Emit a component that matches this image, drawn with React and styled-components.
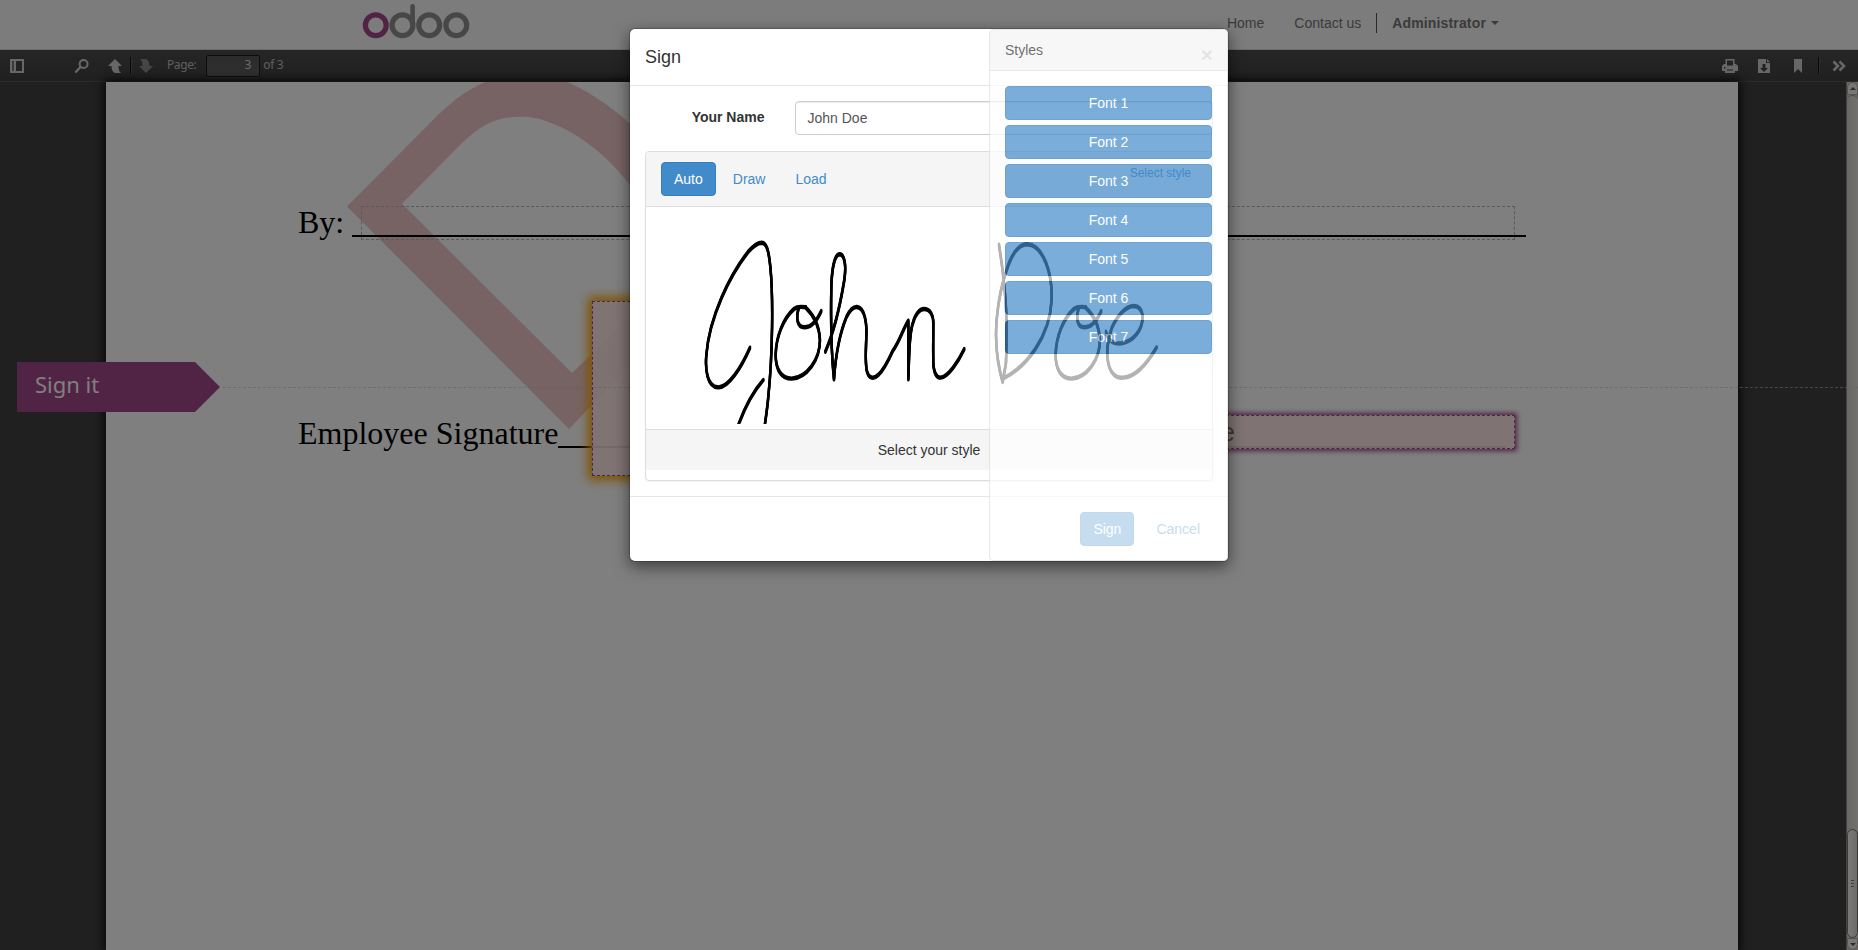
import React from 'react';
import styled, { createGlobalStyle, css } from 'styled-components';

const GlobalStyle = createGlobalStyle`
  *, *::before, *::after { box-sizing: border-box; }
  html, body { margin: 0; padding: 0; height: 100%; overflow: hidden; }
  body {
    font-family: "Liberation Sans", Arial, sans-serif;
    font-size: 14px;
    line-height: 20px;
    color: #333;
    background: #404040;
  }
`;

const Screen = styled.div`
  position: relative;
  display: flex;
  flex-direction: column;
  width: 1858px;
  height: 950px;
  overflow: hidden;
`;

/* ---------- site navigation ---------- */

const Navbar = styled.header`
  display: flex;
  justify-content: space-between;
  flex: 0 0 50px;
  padding: 0 359px 0 362px;
  background: #f8f8f8;
  border-bottom: 1px solid #d8d8d8;
`;

const Logo = styled.svg`
  display: block;
  width: 110px;
  height: 42px;
`;

const NavMenu = styled.nav`
  display: flex;
  align-items: center;
  height: 46px;
  color: #777;
`;

const NavLink = styled.a`
  margin-right: ${(p) => p.$gap || 0}px;
  font-weight: ${(p) => (p.$bold ? 700 : 400)};
  letter-spacing: ${(p) => (p.$bold ? '0.15px' : 'normal')};
`;

const NavDivider = styled.span`
  width: 1px;
  height: 20px;
  margin-right: 15px;
  background: #555;
`;

const Caret = styled.span`
  margin-left: 5px;
  border-top: 4px solid #777;
  border-left: 4px solid transparent;
  border-right: 4px solid transparent;
`;

/* ---------- document viewer toolbar ---------- */

const Toolbar = styled.div`
  display: flex;
  align-items: center;
  justify-content: space-between;
  flex: 0 0 32px;
  padding: 0 11px 0 9px;
  background: linear-gradient(#4c4c4c, #404040);
  border-bottom: 1px solid #565656;
  color: #d0d0d0;
  font-family: "Noto Sans", sans-serif;
  font-size: 12px;
`;

const ToolGroup = styled.div`
  display: flex;
  align-items: center;
`;

const ToolIcon = styled.svg`
  display: block;
  width: 16px;
  height: 16px;
  margin-right: ${(p) => p.$gap || 0}px;
  fill: ${(p) => (p.$dim ? '#8c8c8c' : '#cfcfcf')};
`;

const ToolDivider = styled.span`
  width: 1px;
  height: 17px;
  margin-right: ${(p) => p.$gap}px;
  background: #151515;
  box-shadow: 1px 0 0 #5a5a5a;
`;

const ToolText = styled.span`
  padding-bottom: 2px;
  color: #bdbdbd;
  letter-spacing: -0.4px;
`;

const PageInput = styled.span`
  width: 54px;
  height: 22px;
  margin: 0 3px 0 10px;
  padding: 0 8px;
  border: 1px solid #1a1a1a;
  border-radius: 2px;
  background: linear-gradient(#565656, #626262);
  box-shadow: 0 1px 0 #555;
  color: #d8d8d8;
  line-height: 18px;
  text-align: right;
`;

/* ---------- document ---------- */

const Viewer = styled.main`
  position: relative;
  display: flex;
  flex: 1;
  min-height: 0;
  padding-left: 106px;
  background: #404040;
`;

const Sheet = styled.article`
  position: relative;
  width: 1632px;
  padding: 122px 212px 0 192px;
  background: #fff;
  box-shadow: 0 0 9px 2px rgba(0, 0, 0, 0.85);
  font: 32px/37px "Liberation Serif", "Times New Roman", serif;
  color: #000;
`;

const Watermark = styled.svg`
  position: absolute;
  left: 0;
  top: 0;
  width: 700px;
  height: 400px;
`;

const FormLine = styled.div`
  position: relative;
  display: flex;
  height: 37px;
  margin-right: ${(p) => p.$inset || 0}px;
  margin-bottom: ${(p) => p.$gap || 0}px;
  white-space: nowrap;
`;

const Blank = styled.span`
  flex: 1;
  height: 33px;
  margin-left: ${(p) => p.$space || 0}px;
  border-bottom: 2px solid #000;
`;

const Field = styled.div`
  position: absolute;
  left: ${(p) => p.$x}px;
  top: ${(p) => p.$y}px;
  width: ${(p) => p.$w}px;
  height: ${(p) => p.$h}px;
  padding-left: 10px;
  border: 1px dashed #b4b4b4;
  ${(p) =>
    p.$glow &&
    css`
      border-color: #a24689;
      background: rgba(254, 229, 229, 0.92);
      box-shadow: 0 0 ${p.$blur}px ${p.$spread}px ${p.$glow};
    `}
  font: 26px/32px "Liberation Sans", Arial, sans-serif;
  text-align: center;
  color: #777;
`;

const Scrollbar = styled.div`
  display: flex;
  flex-direction: column;
  width: 12px;
  margin-left: auto;
  border-left: 1px solid #8a8682;
  background: #d2cdc7;
`;

const ScrollButton = styled.div`
  display: flex;
  align-items: center;
  justify-content: center;
  height: ${(p) => p.$h}px;
  background: #f0eeec;
  border: 1px solid #aaa6a2;
  border-radius: ${(p) => (p.$down ? '0 0 6px 6px' : '6px 6px 0 0')};
  &::before {
    content: '';
    border: 3px solid transparent;
    border-${(p) => (p.$down ? 'top' : 'bottom')}: 3px solid #555;
    border-${(p) => (p.$down ? 'bottom' : 'top')}: 0;
  }
`;

const ScrollTrack = styled.div`
  display: flex;
  flex-direction: column;
  justify-content: flex-end;
  flex: 1;
  border-top: 1px solid #9a9692;
  border-radius: 6px 6px 0 0;
  background: linear-gradient(90deg, #d4d0ca, #e4e1dd);
`;

const ScrollThumb = styled.div`
  display: flex;
  flex-direction: column;
  align-items: center;
  justify-content: center;
  gap: 2px;
  height: 109px;
  border: 1px solid #77736e;
  border-radius: 6px;
  background: linear-gradient(90deg, #f4f2f0, #d9d6d2);
`;

const Grip = styled.i`
  width: 3px;
  height: 1px;
  background: #777;
`;

const SignGuide = styled.div`
  position: absolute;
  left: 17px;
  right: 0;
  top: 280px;
  display: flex;
  align-items: center;
`;

const SignTag = styled.div`
  width: 203px;
  height: 50px;
  padding-left: 18px;
  clip-path: polygon(0 0, 178px 0, 100% 50%, 178px 100%, 0 100%);
  background: #a24689;
  color: #fff;
  font: 22px/44px "Noto Sans", sans-serif;
`;

const GuideLine = styled.div`
  flex: 1;
  margin-left: 3px;
  border-top: 1px dashed rgba(195, 195, 195, 0.6);
`;

/* ---------- dialog ---------- */

const Backdrop = styled.div`
  position: absolute;
  inset: 0;
  padding-top: 28px;
  background: rgba(0, 0, 0, 0.5);
`;

const Modal = styled.section`
  position: relative;
  width: 600px;
  margin: 0 auto;
  border: 1px solid rgba(0, 0, 0, 0.2);
  border-radius: 6px;
  background: #fff;
  background-clip: padding-box;
  box-shadow: 0 5px 15px rgba(0, 0, 0, 0.5);
`;

const ModalHeader = styled.div`
  display: flex;
  justify-content: space-between;
  height: 57px;
  padding: 15px;
  border-bottom: 1px solid #e5e5e5;
`;

const Title = styled.h4`
  margin: 0;
  font-size: 18px;
  font-weight: 500;
  line-height: 26px;
`;

const Close = styled.span`
  font-size: 21px;
  font-weight: 700;
  line-height: 21px;
  color: #000;
  opacity: 0.25;
`;

const ModalBody = styled.div`
  padding: 15px;
`;

const FormRow = styled.div`
  display: flex;
  height: 34px;
  margin-bottom: 16px;
`;

const Label = styled.label`
  width: 149.5px;
  padding: 6px 30px 0 0;
  font-weight: 700;
  text-align: right;
`;

const NameInput = styled.div`
  flex: 1;
  padding: 6px 12px;
  border: 1px solid #ccc;
  border-radius: 4px;
  box-shadow: inset 0 1px 1px rgba(0, 0, 0, 0.075);
  color: #555;
`;

const Panel = styled.div`
  padding-bottom: 10px;
  border: 1px solid #ddd;
  border-radius: 4px;
  box-shadow: 0 1px 1px rgba(0, 0, 0, 0.05);
`;

const PanelHeading = styled.div`
  display: flex;
  gap: 4px;
  height: 55px;
  padding: 10px 15px;
  border-bottom: 1px solid #ddd;
  border-radius: 3px 3px 0 0;
  background: #f5f5f5;
`;

const Button = styled.button`
  display: ${(p) => (p.$block ? 'block' : 'inline-block')};
  width: ${(p) => (p.$block ? '100%' : 'auto')};
  height: 34px;
  margin: 0 0 ${(p) => (p.$block ? 5 : 0)}px;
  padding: 6px 12px;
  border: 1px solid ${(p) => (p.$link ? 'transparent' : '#357ebd')};
  border-radius: 4px;
  background: ${(p) => (p.$link ? 'transparent' : '#428bca')};
  color: ${(p) => (p.$link ? '#428bca' : '#fff')};
  font: 14px/20px "Liberation Sans", Arial, sans-serif;
`;

const StyleLink = styled.a`
  margin: 3px 6px 0 auto;
  color: #428bca;
  font-size: 12px;
  line-height: 17px;
`;

const Signature = styled.svg`
  display: block;
  width: 566px;
  height: 222px;
`;

const PanelFooter = styled.div`
  height: 41px;
  padding: 10px 15px;
  border-top: 1px solid #ddd;
  border-radius: 0 0 3px 3px;
  background: #f5f5f5;
  text-align: center;
`;

const ModalFooter = styled.div`
  display: flex;
  justify-content: flex-end;
  gap: 9px;
  height: 65px;
  padding: 15px;
  border-top: 1px solid #e5e5e5;
`;

const StylesPanel = styled.aside`
  position: absolute;
  top: 0;
  right: 0;
  bottom: 0;
  width: 239px;
  border: 1px solid #ddd;
  border-radius: 4px;
  background: #fff;
  opacity: 0.7;
`;

const StylesHeading = styled.div`
  height: 41px;
  padding: 10px 15px;
  border-bottom: 1px solid #ddd;
  border-radius: 3px 3px 0 0;
  background: #f5f5f5;
`;

const StylesBody = styled.div`
  padding: 15px;
`;

const strokes = [
  'M390,383 C365,440 325,505 293,502 C262,500 255,450 259,405 C268,290 330,165 385,95 C400,78 413,68 425,68 C440,69 446,90 451,140 C460,230 458,400 445,530 C442,565 438,590 434,618',
  'M430,480 C405,508 375,560 354,618',
  'M616,395 C640,340 660,260 673,180 C679,140 675,104 659,103 C645,103 636,140 634,200 C632,300 634,400 642,478 C646,420 655,350 680,290 C690,270 700,260 711,261 C735,264 741,310 739,350 C738,390 735,420 740,450 C745,475 760,480 775,465 C795,445 808,415 818,393 C836,370 848,330 865,302 L865,478 C868,420 866,350 878,312 C885,282 900,267 912,267 C930,267 941,285 940,310 C940,350 939,390 940,430 C942,462 950,473 962,473 C985,470 1015,425 1033,387',
  'M1137,74 C1142,110 1148,140 1153,200 C1162,280 1160,380 1158,430 L1148,486 C1132,430 1125,360 1130,300 C1135,240 1145,190 1165,135 C1180,95 1200,73 1222,73 C1270,76 1298,160 1295,240 C1290,350 1220,440 1152,474',
  'M1458,335 C1465,365 1485,372 1505,370 C1540,365 1568,330 1568,290 C1566,268 1558,258 1540,258 C1515,260 1490,290 1475,325 C1460,370 1458,400 1465,430 C1472,462 1490,475 1510,473 C1550,470 1585,425 1610,382',
];

const oStroke =
  'M558,262 C540,259 530,260 522,267 C490,295 468,350 467,405 C467,450 485,476 515,476 C560,473 600,420 600,360 C598,320 580,285 558,264 M536,266 C528,290 530,322 553,322 C575,322 592,300 604,273';

function Handwriting() {
  return (
    <Signature viewBox="646 207 566 222">
      <defs>
        <clipPath id="ink-area">
          <rect x="646" y="207" width="566" height="216.7" />
        </clipPath>
      </defs>
      <g clipPath="url(#ink-area)">
        <g
          transform="translate(620 220) scale(.3333)"
          fill="none"
          stroke="#000"
          strokeWidth="7.3"
          strokeLinecap="round"
          strokeLinejoin="round"
        >
          {[-3, 0, 3].map((dy) => (
            <g key={dy} transform={`translate(0 ${dy})`}>
              {strokes.map((d) => (
                <path key={d} d={d} />
              ))}
              <path d={oStroke} />
              <path d={oStroke} transform="translate(840 0)" />
            </g>
          ))}
        </g>
      </g>
    </Signature>
  );
}

const fonts = ['Font 1', 'Font 2', 'Font 3', 'Font 4', 'Font 5', 'Font 6', 'Font 7'];

export default function App() {
  return (
    <>
      <GlobalStyle />
      <Screen>
        <Navbar>
          <Logo viewBox="0 0 110 42" fill="none" strokeWidth="5.2">
            <circle cx="13.8" cy="25.3" r="10.4" stroke="#a24689" />
            <g stroke="#8f8f8f">
              <circle cx="40.5" cy="25.3" r="10.4" />
              <circle cx="67.2" cy="25.3" r="10.4" />
              <circle cx="94.3" cy="25.3" r="10.4" />
              <path d="M50.6 6.2V26" strokeLinecap="round" strokeWidth="4.6" />
            </g>
          </Logo>
          <NavMenu>
            <NavLink $gap={30}>Home</NavLink>
            <NavLink $gap={15}>Contact us</NavLink>
            <NavDivider />
            <NavLink $bold>Administrator</NavLink>
            <Caret />
          </NavMenu>
        </Navbar>

        <Toolbar>
          <ToolGroup>
            <ToolIcon viewBox="0 0 16 16" $gap={49}>
              <path fillRule="evenodd" d="M1 1h14v14H1zM3 3v10h2V3zM7 3v10h6V3z" />
              <path d="M3 3h2v10H3z" opacity=".35" />
            </ToolIcon>
            <ToolIcon viewBox="0 0 16 16" $gap={17}>
              <circle cx="9.6" cy="6" r="4" fill="none" stroke="#cfcfcf" strokeWidth="2" />
              <path d="M6.5 9L2 13.8" stroke="#cfcfcf" strokeWidth="2.4" strokeLinecap="round" />
            </ToolIcon>
            <ToolIcon viewBox="0 0 16 16" $gap={7}>
              <path d="M8 1l7 7h-3.500c0 3 .3 5 2.500 7H8c-2.500-1-3.500-3.500-3.500-7H1z" />
            </ToolIcon>
            <ToolDivider $gap={7} />
            <ToolIcon viewBox="0 0 16 16" $gap={13} $dim>
              <path d="M8 15l7-7h-3.500c0-3.500-1-6-3.500-7H2c2.200 2 2.500 4 2.500 7H1z" />
            </ToolIcon>
            <ToolText>Page:</ToolText>
            <PageInput>3</PageInput>
            <ToolText>of 3</ToolText>
          </ToolGroup>
          <ToolGroup>
            <ToolIcon viewBox="0 0 16 16" $gap={18}>
              <path
                fillRule="evenodd"
                d="M3.500 1h9v5H14l2 2v5h-3v2H3v-2H0V8l2-2h1.500zM5 2.500v5h6v-5zM2 9v1.500h1.500V9zM5 11.500h6v1H5z"
              />
            </ToolIcon>
            <ToolIcon viewBox="0 0 16 16" $gap={18}>
              <path fillRule="evenodd" d="M2 1h8v4h4v10H2zM6.500 6v4H4l4 4 4-4H9.500V6z" />
              <path d="M11 1l3 3h-3z" />
            </ToolIcon>
            <ToolIcon viewBox="0 0 16 16" $gap={12}>
              <path d="M4 1h8v14l-4-4-4 4z" />
            </ToolIcon>
            <ToolDivider $gap={12} />
            <ToolIcon viewBox="0 0 16 16">
              <path
                d="M2.500 3.500L7 8l-4.500 4.500M8.500 3.500L13 8l-4.500 4.500"
                fill="none"
                stroke="#cfcfcf"
                strokeWidth="2.600"
              />
            </ToolIcon>
          </ToolGroup>
        </Toolbar>

        <Viewer>
          <Sheet>
            <Watermark viewBox="106 82 700 400">
              <path
                fill="#eec6c6"
                fillRule="evenodd"
                d="M347 206.500L432 121C455 98 470 88 490 80H563C584 89 603 101 620 115C650 140 668 165 700 200V293L569 429ZM402 203.700L572 373L690 260C670 235 645 203 620 173C600 150 575 132 553.600 124C540 118 532 116.700 520 116.700C498 116.700 483 123 462 143Z"
              />
            </Watermark>
            <FormLine $gap={174}>
              By:
              <Blank $space={8} />
            </FormLine>
            <FormLine $inset={20}>
              Employee Signature
              <Blank />
            </FormLine>
            <Field $x={255} $y={124} $w={1154} $h={34} />
            <Field $x={486} $y={219} $w={420} $h={175} $glow="#ffa500" $blur={10} $spread={4} />
            <Field $x={784} $y={333} $w={625} $h={34} $glow="#a24689" $blur={5} $spread={2}>
              Date
            </Field>
          </Sheet>
          <Scrollbar>
            <ScrollButton $h={13} />
            <ScrollTrack>
              <ScrollThumb>
                <Grip />
                <Grip />
                <Grip />
              </ScrollThumb>
            </ScrollTrack>
            <ScrollButton $h={12} $down />
          </Scrollbar>
          <SignGuide>
            <SignTag>Sign it</SignTag>
            <GuideLine />
          </SignGuide>
        </Viewer>

        <Backdrop>
          <Modal>
            <ModalHeader>
              <Title>Sign</Title>
              <Close>×</Close>
            </ModalHeader>
            <ModalBody>
              <FormRow>
                <Label>Your Name</Label>
                <NameInput>John Doe</NameInput>
              </FormRow>
              <Panel>
                <PanelHeading>
                  <Button>Auto</Button>
                  <Button $link>Draw</Button>
                  <Button $link>Load</Button>
                  <StyleLink>Select style</StyleLink>
                </PanelHeading>
                <Handwriting />
                <PanelFooter>Select your style</PanelFooter>
              </Panel>
            </ModalBody>
            <ModalFooter>
              <Button>Sign</Button>
              <Button $link>Cancel</Button>
            </ModalFooter>
            <StylesPanel>
              <StylesHeading>Styles</StylesHeading>
              <StylesBody>
                {fonts.map((name) => (
                  <Button key={name} $block>
                    {name}
                  </Button>
                ))}
              </StylesBody>
            </StylesPanel>
          </Modal>
        </Backdrop>
      </Screen>
    </>
  );
}
